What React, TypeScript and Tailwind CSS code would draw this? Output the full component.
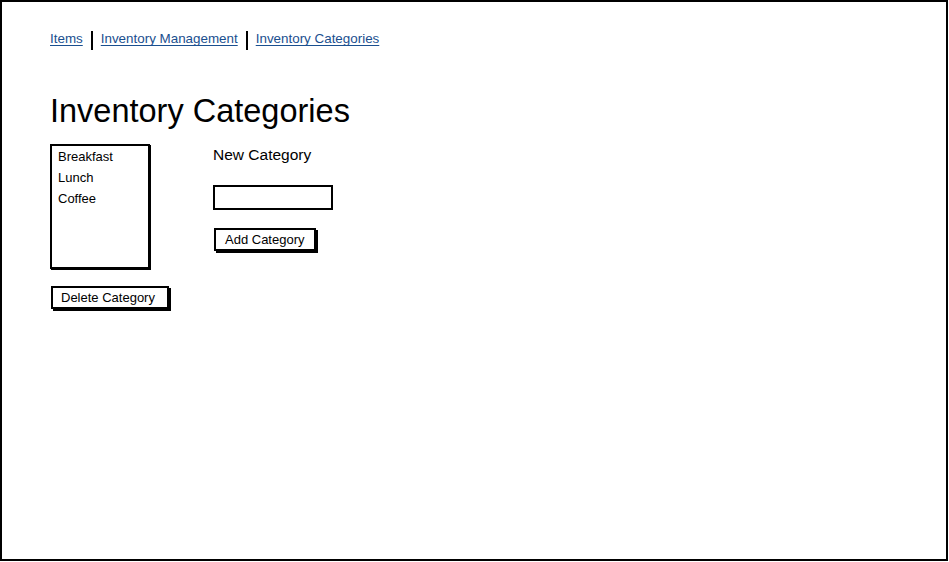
import React from "react";

const crumbs = ["Items", "Inventory Management", "Inventory Categories"];
const categories = ["Breakfast", "Lunch", "Coffee"];

export default function App() {
  return (
    <div
      className="w-[949px] h-[562px] bg-white"
      style={{ fontFamily: '"Liberation Sans", Arial, sans-serif' }}
    >
      <div className="w-[948px] h-[561px] border-2 border-black px-[48px] pt-[28px] text-black">
        {/* breadcrumb links */}
        <div className="flex items-center h-[20px]">
          {crumbs.map((c, i) => (
            <React.Fragment key={c}>
              {i > 0 && <div className="w-[2px] h-[19px] bg-black mx-[8px]" />}
              <a className="text-[13.4px] text-[#1a4f8f] underline underline-offset-2 leading-none -mt-[2px]">{c}</a>
            </React.Fragment>
          ))}
        </div>

        <h1 className="mt-[43px] text-[32.5px] leading-[36px]">Inventory Categories</h1>

        <div className="flex mt-[15px]">
          <div className="flex flex-col w-[121px]">
            <ul className="w-[100px] h-[125px] border-2 border-black px-[6px] pt-0 shadow-[1px_1px_0_#000]">
              {categories.map((c) => (
                <li key={c} className="text-[13px] leading-[21px]">{c}</li>
              ))}
            </ul>
            <button className="mt-[17px] ml-[1px] w-[118px] h-[23px] border-2 border-black bg-white text-[13px] shadow-[2px_2px_0_#000] text-left pl-[8px]">
              Delete Category
            </button>
          </div>

          <div className="ml-[42px] mt-[1px] flex flex-col">
            <div className="text-[15.5px] leading-[20px]">New Category</div>
            <input className="mt-[20px] w-[120px] h-[25px] border-2 border-black bg-white outline-none" />
            <button className="mt-[18px] ml-[1px] w-[102px] h-[23px] border-2 border-black bg-white text-[13px] shadow-[2px_2px_0_#000] text-left pl-[9px]">
              Add Category
            </button>
          </div>
        </div>
      </div>
    </div>
  );
}
